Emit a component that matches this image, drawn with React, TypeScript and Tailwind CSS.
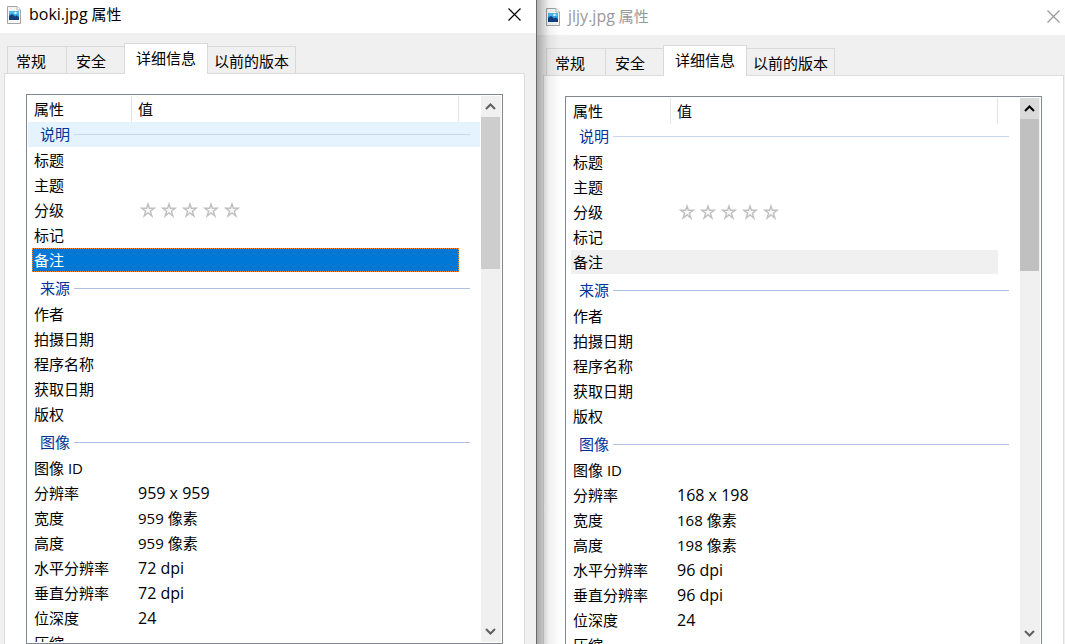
import clsx from 'clsx';

type Row = { name: string; value?: string; unit?: string; rating?: boolean };
type Group = { title: string; rows: Row[] };

const SELECTED = '备注';

const TABS = [
  { label: '常规', className: 'h-[27px] w-[59px] border-l border-t pl-2 pt-0.5 text-left' },
  { label: '安全', className: 'h-[27px] w-[58px] border-l border-t pl-[9px] pt-0.5 text-left' },
  { label: '详细信息', className: 'relative z-10 -mb-px h-[31px] w-[84px] border-x border-t bg-white pb-0.5 text-center' },
  { label: '以前的版本', className: 'h-[27px] w-[88px] border-r border-t pt-0.5 text-center' },
];

function buildGroups(width: number, height: number, dpi: number): Group[] {
  return [
    {
      title: '说明',
      rows: [{ name: '标题' }, { name: '主题' }, { name: '分级', rating: true }, { name: '标记' }, { name: SELECTED }],
    },
    {
      title: '来源',
      rows: [{ name: '作者' }, { name: '拍摄日期' }, { name: '程序名称' }, { name: '获取日期' }, { name: '版权' }],
    },
    {
      title: '图像',
      rows: [
        { name: '图像 ID' },
        { name: '分辨率', value: `${width} x ${height}` },
        { name: '宽度', value: `${width}`, unit: '像素' },
        { name: '高度', value: `${height}`, unit: '像素' },
        { name: '水平分辨率', value: `${dpi} dpi` },
        { name: '垂直分辨率', value: `${dpi} dpi` },
        { name: '位深度', value: '24' },
        { name: '压缩' },
      ],
    },
  ];
}

function FileIcon() {
  return (
    <svg width="14" height="18" viewBox="0 0 14 18" className="shrink-0" aria-hidden="true">
      <path d="M.5.5h9.500l3.500 3.500v13.500H.5z" fill="#f7f7f7" stroke="#a3a3a3" />
      <path d="M10 .5V4h3.500" fill="#fff" stroke="#b4b4b4" />
      <path d="M2 5h10v9H2z" fill="#2fa3e6" />
      <path d="M2 5h10v3H2z" fill="#4cbcf0" />
      <circle cx="8.500" cy="7" r="1.200" fill="#e8f7ff" />
      <path d="M2 10l3-2 3 2.500 1.500-1L12 11v3H2z" fill="#143f7c" />
    </svg>
  );
}

function Stars() {
  return (
    <span className="flex gap-[5px] pl-0.5">
      {[1, 2, 3, 4, 5].map((n) => (
        <button key={n} type="button" aria-label={`${n} 星`} className="block">
          <svg width="16" height="16" viewBox="0 0 16 16">
            <path
              d="M8 2l1.400 4.300h4.800l-3.800 2.900 1.500 4.800L8 11l-3.900 3 1.500-4.800-3.800-2.900h4.800z"
              fill="#f8f8f8"
              stroke="#c0c0c0"
              strokeWidth="1.400"
            />
          </svg>
        </button>
      ))}
    </span>
  );
}

function Scrollbar({ pressed }: { pressed: boolean }) {
  return (
    <div className="flex w-5 shrink-0 flex-col bg-[#f0f0f0]">
      <button
        type="button"
        aria-label="向上滚动"
        className={clsx(
          'flex h-[21px] w-[19px] shrink-0 items-center justify-center',
          pressed ? 'bg-[#dadada] text-black' : 'text-[#606060]'
        )}
      >
        <svg width="11" height="7" viewBox="0 0 11 7">
          <path d="M1 6l4.500-4.500L10 6" fill="none" stroke="currentColor" strokeWidth="2" />
        </svg>
      </button>
      <div className={clsx('h-[152px] w-[19px] shrink-0', pressed ? 'bg-[#c0c0c0]' : 'bg-[#cdcdcd]')} />
      <button
        type="button"
        aria-label="向下滚动"
        className="mt-auto flex h-[21px] w-[19px] shrink-0 items-center justify-center text-[#606060]"
      >
        <svg width="11" height="7" viewBox="0 0 11 7">
          <path d="M1 1l4.500 4.500L10 1" fill="none" stroke="currentColor" strokeWidth="2" />
        </svg>
      </button>
    </div>
  );
}

function DetailRow({ row, active }: { row: Row; active: boolean }) {
  if (row.name === SELECTED) {
    return (
      <tr className="h-[25px] align-top">
        <td className="p-0" />
        <td colSpan={2} className="p-0">
          <div
            className={clsx(
              'flex h-6 items-center',
              active ? 'border border-dotted border-[#ff8728] bg-[#0078d7] pl-px text-white' : 'bg-[#f0f0f0] pl-0.5'
            )}
          >
            {row.name}
          </div>
        </td>
        <td className="p-0" />
      </tr>
    );
  }

  return (
    <tr className="h-[25px] align-top">
      <td className="p-0" />
      <td className="p-0">
        <div className="flex h-6 items-center whitespace-nowrap pl-0.5">{row.name}</div>
      </td>
      <td className="p-0">
        <div className="flex h-6 items-center gap-1 whitespace-nowrap pl-1.5">
          {row.rating && <Stars />}
          {row.value && <span className={clsx(!row.unit && 'text-base leading-5')}>{row.value}</span>}
          {row.unit && <span>{row.unit}</span>}
        </div>
      </td>
      <td className="p-0" />
    </tr>
  );
}

function DetailTable({ groups, active }: { groups: Group[]; active: boolean }) {
  return (
    <table className="w-full table-fixed border-separate border-spacing-0 text-left">
      <colgroup>
        <col className="w-1" />
        <col className="w-[100px]" />
        <col />
        <col className="w-[21px]" />
      </colgroup>
      <thead>
        <tr className="h-[26px]">
          <th className="p-0" />
          <th className="border-r border-[#e5e5e5] p-0 pl-0.5 font-normal">属性</th>
          <th className="border-r border-[#e5e5e5] p-0 pl-1.5 font-normal">值</th>
          <th className="p-0" />
        </tr>
      </thead>
      {groups.map((group, i) => (
        <tbody key={group.title}>
          <tr>
            <th colSpan={4} className={clsx('p-0 font-normal', i === 0 && 'pb-px')}>
              <div
                className={clsx(
                  'flex items-center gap-1 pl-3 pr-2.5 text-[#003399]',
                  i === 0 ? 'h-[25px]' : 'h-[29px] pt-0.5',
                  i === 0 && active && 'bg-[#e5f3ff]'
                )}
              >
                <span className="pb-0.5">{group.title}</span>
                <span className={clsx('h-px flex-1', i === 0 ? 'bg-[#c8d6ef]' : 'bg-[#b0bfe2]')} />
              </div>
            </th>
          </tr>
          {group.rows.map((row) => (
            <DetailRow key={row.name} row={row} active={active} />
          ))}
        </tbody>
      ))}
    </table>
  );
}

type WindowProps = {
  file: string;
  groups: Group[];
  active?: boolean;
};

function PropertiesWindow({ file, groups, active = false }: WindowProps) {
  return (
    <section
      className={clsx(
        'relative flex min-w-0 flex-col bg-[#f0f0f0]',
        active ? 'h-screen border-r border-[#6b6b6b]' : 'h-[calc(100vh+2px)]'
      )}
    >
      <header
        className={clsx(
          'flex shrink-0 items-center bg-white',
          active ? 'h-[33px] pb-1 pl-[7px] pr-[15px]' : 'h-[35px] pb-0.5 pl-[9px] pr-[5px]'
        )}
      >
        <FileIcon />
        <h1 className={clsx('ml-2 flex flex-1 items-baseline gap-1 pb-0.5', !active && 'text-[#999999]')}>
          <span className="text-base leading-5">{file}</span>
          <span>属性</span>
        </h1>
        <button type="button" aria-label="关闭" className={clsx(!active && 'text-[#999999]')}>
          <svg width="13" height="13" viewBox="0 0 13 13">
            <path d="M.5.5l12 12M12.500.5l-12 12" stroke="currentColor" strokeWidth="1.200" />
          </svg>
        </button>
      </header>

      <div className={clsx('flex min-h-0 flex-1 flex-col pt-2.5', active ? 'pl-1 pr-[11px]' : 'pl-1.5 pr-px')}>
        <div role="tablist" className="flex shrink-0 items-end pl-[3px]">
          {TABS.map((tab) => (
            <button
              key={tab.label}
              type="button"
              role="tab"
              aria-selected={tab.label === '详细信息'}
              className={clsx('shrink-0 whitespace-nowrap border-[#d9d9d9]', tab.className)}
            >
              {tab.label}
            </button>
          ))}
        </div>

        <div className="flex min-h-0 flex-1 flex-col border-x border-t border-[#dcdcdc] bg-white px-[21px] pt-5">
          <div className="flex min-h-0 flex-1 border border-[#828790] p-px">
            <div className="mr-px min-w-0 flex-1 overflow-hidden">
              <DetailTable groups={groups} active={active} />
            </div>
            <Scrollbar pressed={!active} />
          </div>
        </div>
      </div>

      {/* shadow cast by the window in front */}
      {!active && (
        <div className="pointer-events-none absolute inset-y-0 left-0 w-6 bg-linear-to-r from-black/30 via-black/6 to-transparent" />
      )}
    </section>
  );
}

export default function App() {
  return (
    <main className="grid h-screen grid-cols-[537fr_528fr] overflow-hidden bg-white font-['Open_Sans','Noto_Sans_CJK_SC',sans-serif] text-[15px] leading-5 text-black">
      <PropertiesWindow file="boki.jpg" groups={buildGroups(959, 959, 72)} active />
      <PropertiesWindow file="jljy.jpg" groups={buildGroups(168, 198, 96)} />
    </main>
  );
}
